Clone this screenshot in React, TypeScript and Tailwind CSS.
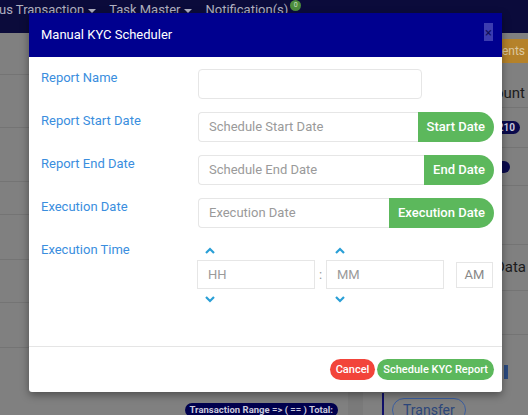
import React from "react"

function Caret() {
  return (
    <span className="ml-1 inline-block h-0 w-0 border-x-[4px] border-t-[4px] border-x-transparent border-t-[#b0b0c0] align-middle" />
  )
}

function ChevronUp() {
  return (
    <svg width="10" height="7" viewBox="0 0 10 7" fill="none">
      <path d="M1 6L5 2L9 6" stroke="#2a9fd6" strokeWidth="2.2" />
    </svg>
  )
}

function ChevronDown() {
  return (
    <svg width="10" height="7" viewBox="0 0 10 7" fill="none">
      <path d="M1 1L5 5L9 1" stroke="#2a9fd6" strokeWidth="2.2" />
    </svg>
  )
}

function DateRow({ label, placeholder, button }: { label: string; placeholder: string; button: string }) {
  return (
    <div className="flex">
      <label className="w-[157px] text-[13px] leading-[18px] text-[#3a8ede]">{label}</label>
      <div className="flex h-[30px] w-[296px]">
        <input
          placeholder={placeholder}
          className="min-w-0 flex-1 rounded-l-[4px] border border-r-0 border-[#e6e6e6] px-[10px] text-[13px] text-[#555] outline-none placeholder:text-[#9a9a9a]"
        />
        <button className="rounded-r-full bg-[#5cb85c] px-[9px] text-[13px] font-medium text-white">{button}</button>
      </div>
    </div>
  )
}

export default function App() {
  const leftRows = [42, 53, 54, 33, 45, 43, 45]

  return (
    <div className="relative h-[415px] w-[528px] overflow-hidden bg-[#808080] font-['Roboto',sans-serif]">
      {/* page behind the dialog */}
      <nav className="flex h-[33px] items-start gap-[13px] bg-[#0b0b3b] pt-[1px] text-[13px] leading-[18px] text-[#b0b0c0]">
        <span className="-ml-[1px]">
          us Transaction
          <Caret />
        </span>
        <span>
          Task Master
          <Caret />
        </span>
        <span className="flex items-start">
          Notification(s)
          <span className="ml-[2px] mt-[-1px] flex h-[11px] w-[11px] items-center justify-center rounded-full bg-[#4c8c3c] text-[7px] leading-none text-[#c8e0c0]">
            0
          </span>
        </span>
      </nav>

      <div className="flex">
        <div className="flex w-[348px] flex-col">
          {leftRows.map((h, i) => (
            <div key={i} className="border-b border-[#747474]" style={{ height: h }} />
          ))}
          <div className="flex h-[60px] justify-end pr-[10px] pt-[55px]">
            <span className="h-[14px] rounded-full bg-[#00004e] px-[5px] text-[9.5px] font-bold leading-[14px] text-[#c8c8dc]">
              Transaction Range =&gt; ( == ) Total:
            </span>
          </div>
        </div>
        <div className="w-[15px] bg-[#7a7a7a]" />
        <div className="flex flex-1 flex-col">
          <div className="flex h-[30px] items-end justify-end">
            <span className="h-[24px] w-[90px] bg-[#b5822a] pr-[3px] text-right text-[12px] leading-[24px] text-[#dcc8a0]">
              Statements
            </span>
          </div>
          <div className="flex h-[45px] items-end justify-end border-b border-[#747474] pb-[5px] pr-[3px] text-[15px] leading-[18px] text-[#1c1c1c]">
            Amount
          </div>
          <div className="flex h-[40px] items-center justify-end border-b border-[#747474] pr-[8px]">
            <span className="rounded-full bg-[#0a0a4c] px-[5px] text-[10px] font-bold leading-[13px] text-[#c8c8dc]">1210</span>
          </div>
          <div className="flex h-[38px] items-center justify-end border-b border-[#747474] pr-[18px]">
            <span className="h-[12px] w-[20px] rounded-full bg-[#0a0a4c]" />
          </div>
          <div className="h-[59px] border-b border-[#747474]" />
          <div className="flex h-[46px] items-center justify-end border-b border-[#747474] pr-[2px] text-[15px] text-[#1c1c1c]">
            Data
          </div>
          <div className="h-[44px] border-b border-[#747474]" />
          <div className="flex h-[58px] justify-end pr-[20px] pt-[30px]">
            <span className="h-[14px] w-[4px] bg-[#2a4a80]" />
          </div>
          <div className="ml-[19px] flex h-[40px] border-l-2 border-[#10106a] pl-[8px] pt-[5px]">
            <span className="h-[24px] rounded-full border border-[#3b5ea0] px-[10px] text-[14px] leading-[22px] text-[#2c467a]">
              Transfer
            </span>
          </div>
        </div>
      </div>

      {/* dialog */}
      <div className="absolute inset-0 pl-[29px] pt-[13px]">
        <div className="w-[473px] rounded-b-[3px] bg-white shadow-[0_3px_9px_rgba(0,0,0,0.4)]">
          <div className="flex h-[44px] items-start justify-between bg-[#00008f] pl-[12px] pr-[9px]">
            <h4 className="pt-[13px] text-[13px] leading-[18px] text-white">Manual KYC Scheduler</h4>
            <button className="mt-[10px] flex h-[18px] w-[9px] items-center justify-center bg-[#3c3cb0] text-[13px] leading-none text-[#10105a]">
              ×
            </button>
          </div>

          <div className="flex flex-col gap-[13px] pb-[38px] pl-[12px] pt-[12px]">
            <div className="flex">
              <label className="w-[157px] text-[13px] leading-[18px] text-[#3a8ede]">Report Name</label>
              <input className="h-[30px] w-[224px] rounded-[4px] border border-[#e6e6e6] px-[10px] text-[13px] outline-none" />
            </div>
            <DateRow label="Report Start Date" placeholder="Schedule Start Date" button="Start Date" />
            <DateRow label="Report End Date" placeholder="Schedule End Date" button="End Date" />
            <DateRow label="Execution Date" placeholder="Execution Date" button="Execution Date" />

            <div className="flex">
              <label className="w-[156px] text-[13px] leading-[18px] text-[#3a8ede]">Execution Time</label>
              <div className="flex items-center">
                <div className="flex flex-col">
                  <div className="flex h-[19px] items-center pl-[8px]">
                    <ChevronUp />
                  </div>
                  <input
                    placeholder="HH"
                    className="h-[29px] w-[118px] border border-[#e6e6e6] px-[10px] text-[13px] outline-none placeholder:text-[#9a9a9a]"
                  />
                  <div className="flex h-[19px] items-center pl-[8px] pt-[2px]">
                    <ChevronDown />
                  </div>
                </div>
                <span className="w-[11px] text-center text-[13px] text-[#999]">:</span>
                <div className="flex flex-col">
                  <div className="flex h-[19px] items-center pl-[9px]">
                    <ChevronUp />
                  </div>
                  <input
                    placeholder="MM"
                    className="h-[29px] w-[118px] border border-[#e6e6e6] px-[10px] text-[13px] outline-none placeholder:text-[#9a9a9a]"
                  />
                  <div className="flex h-[19px] items-center pl-[9px] pt-[2px]">
                    <ChevronDown />
                  </div>
                </div>
                <div className="ml-[12px] flex h-[26px] w-[37px] items-center justify-center border border-[#e6e6e6] text-[13px] text-[#888]">
                  AM
                </div>
              </div>
            </div>
          </div>

          <div className="flex h-[46px] items-center justify-end gap-[2px] border-t border-[#e5e5e5] pr-[8px]">
            <button className="h-[21px] rounded-full bg-[#f2443a] px-[6px] text-[11px] font-medium leading-[21px] text-white">
              Cancel
            </button>
            <button className="h-[21px] rounded-full bg-[#5cb85c] px-[6px] text-[11px] font-medium leading-[21px] text-white">
              Schedule KYC Report
            </button>
          </div>
        </div>
      </div>
    </div>
  )
}
